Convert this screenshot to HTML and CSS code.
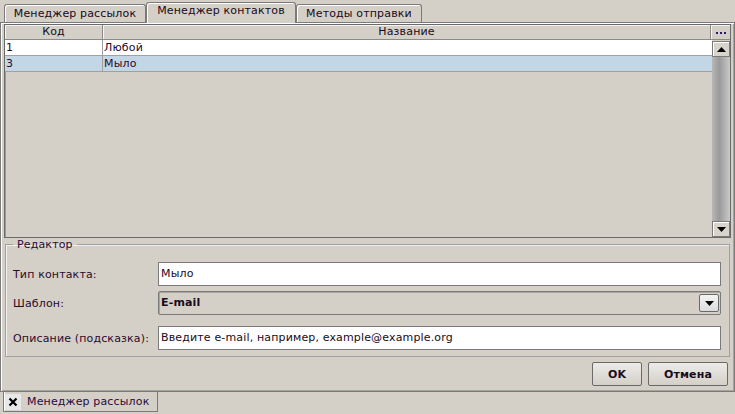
FILE: index.html
```html
<!DOCTYPE html>
<html lang="ru">
<head>
<meta charset="utf-8">
<link rel="stylesheet" href="styles.css">
</head>
<body>
<div class="window">
  <div class="tabs">
    <div class="tab">Менеджер рассылок</div>
    <div class="tab active">Менеджер контактов</div>
    <div class="tab">Методы отправки</div>
  </div>
  <div class="panel">
    <div class="table">
      <div class="thead">
        <div class="th c1">Код</div>
        <div class="th c2">Название</div>
        <div class="th c3"><span class="dots"><i></i><i></i><i></i></span></div>
      </div>
      <div class="tbody">
        <div class="rows">
          <div class="row"><div class="td c1">1</div><div class="td c2">Любой</div></div>
          <div class="row sel"><div class="td c1">3</div><div class="td c2">Мыло</div></div>
        </div>
        <div class="vscroll">
          <div class="sbtn"><svg width="9" height="5" viewBox="0 0 9 5"><path d="M0 5 L4.5 0 L9 5 Z" fill="#000"/></svg></div>
          <div class="track"></div>
          <div class="sbtn"><svg width="9" height="5" viewBox="0 0 9 5"><path d="M0 0 L4.5 5 L9 0 Z" fill="#000"/></svg></div>
        </div>
      </div>
    </div>
    <fieldset class="group">
      <legend>Редактор</legend>
      <div class="form">
        <label class="lbl">Тип контакта:</label>
        <div class="input">Мыло</div>
        <label class="lbl">Шаблон:</label>
        <div class="combo"><span>E-mail</span><span class="cbtn"><svg width="9" height="5" viewBox="0 0 9 5"><path d="M0 0 L4.5 5 L9 0 Z" fill="#000"/></svg></span></div>
        <label class="lbl">Описание (подсказка):</label>
        <div class="input">Введите e-mail, например, example@example.org</div>
      </div>
    </fieldset>
    <div class="buttons">
      <button class="btn ok">OK</button>
      <button class="btn cancel">Отмена</button>
    </div>
  </div>
  <div class="bottombar">
    <div class="btab"><span class="close"><svg width="10" height="10" viewBox="0 0 10 10"><path d="M1.5 1.5 L8.5 8.5 M8.5 1.5 L1.5 8.5" stroke="#000" stroke-width="2.2"/></svg></span>Менеджер рассылок</div>
  </div>
</div>
</body>
</html>
```

FILE: styles.css
```css
html, body {
  margin: 0;
  padding: 0;
}
body {
  background: #d4d0c8;
  font-family: "DejaVu Sans", sans-serif;
  font-size: 11px;
  letter-spacing: 0.15px;
  color: #2a0a2a;
  width: 735px;
  height: 414px;
  overflow: hidden;
}
.window {
  display: flex;
  flex-direction: column;
  height: 414px;
}
.tabs {
  display: flex;
  align-items: flex-end;
  height: 22px;
  padding-left: 4px;
  box-sizing: border-box;
}
.tab {
  height: 18px;
  box-sizing: border-box;
  border: 1px solid #7a7a7a;
  border-bottom: none;
  border-radius: 3px 3px 0 0;
  box-shadow: inset 1px 1px 0 #ffffff;
  background: #d4d0c8;
  line-height: 18px;
  color: #1a0a1a;
  white-space: nowrap;
  text-align: center;
}
.tab:first-child { width: 142px; }
.tab.active {
  height: 21px;
  width: 150px;
  line-height: 15px;
  position: relative;
  z-index: 1;
  margin-bottom: -1px;
}
.tab:last-child { width: 126px; }
.panel {
  flex: 0 0 370px;
  box-sizing: border-box;
  border: 1px solid #7a7a7a;
  box-shadow: inset 1px 1px 0 #ffffff, inset -1px -1px 0 #a8a49c;
  padding: 1px 3px 0 3px;
  display: flex;
  flex-direction: column;
}
.table {
  height: 214px;
  box-sizing: border-box;
  border: 1px solid #6a6a6a;
  box-shadow: inset 1px 1px 0 #9a9a9a;
  display: flex;
  flex-direction: column;
  background: #d4d0c8;
}
.thead {
  display: grid;
  grid-template-columns: 98px 1fr 19px;
  height: 15px;
}
.th {
  box-sizing: border-box;
  border-right: 1px solid #8a8a8a;
  border-bottom: 1px solid #8a8a8a;
  box-shadow: inset 1px 1px 0 #f4f4f4;
  text-align: center;
  line-height: 14px;
  color: #1a0a1a;
}
.th.c3 {
  border-right: none;
  display: flex;
  align-items: center;
  justify-content: center;
}
.dots { display: flex; gap: 2px; margin-top: 2px; }
.dots i {
  width: 2px; height: 2px; background: #2a1a6a; display: block;
}
.tbody {
  flex: 1;
  display: flex;
}
.rows {
  flex: 1;
  display: flex;
  flex-direction: column;
}
.row {
  display: grid;
  grid-template-columns: 98px 1fr;
  height: 16px;
  background: #ffffff;
  border-bottom: 1px solid #a0a0a0;
  box-sizing: border-box;
}
.row.sel { background: #c2d6e6; }
.td {
  line-height: 15px;
  padding-left: 1px;
  border-right: 1px solid #a0a0a0;
  white-space: nowrap;
}
.td.c2 { border-right: none; }
.vscroll {
  width: 18px;
  display: flex;
  flex-direction: column;
  padding-top: 1px;
}
.sbtn {
  height: 16px;
  box-sizing: border-box;
  border: 1px solid #7a7a7a;
  box-shadow: inset 1px 1px 0 #ffffff;
  background: #d8d4cc;
  display: flex;
  align-items: center;
  justify-content: center;
}
.track {
  flex: 1;
  background: linear-gradient(to right, #b8b8b8, #9a9a9a 40%, #c8c8c8);
}
.group {
  margin: 0 0 0 1px;
  width: 725px;
  height: 119px;
  box-sizing: border-box;
  border: 1px solid #a0a0a0;
  box-shadow: inset 1px 1px 0 #f0f0f0;
  padding: 0 8px 0 7px;
}
.group legend {
  padding: 0 4px;
  margin-left: 0;
  line-height: 13px;
  color: #2a0a3a;
}
.form {
  display: grid;
  grid-template-columns: 145px 1fr;
  grid-template-rows: 24px 24px 24px;
  row-gap: 5px;
  align-items: center;
  margin-top: 11px;
}
.input, .combo {
  height: 24px;
  box-sizing: border-box;
  border: 1px solid #7a7a7a;
  background: #ffffff;
  line-height: 22px;
  padding-left: 2px;
  color: #1a0a1a;
}
.form .lbl:nth-of-type(3), .input:last-child { margin-top: 12px; }
.combo {
  background: #d4d0c8;
  box-shadow: inset 1px 1px 0 #a8a49c;
  border-radius: 2px;
  font-weight: bold;
  display: flex;
  justify-content: space-between;
  align-items: center;
  padding-right: 1px;
}
.cbtn {
  width: 20px;
  height: 18px;
  box-sizing: border-box;
  border: 1px solid #6a6a6a;
  border-radius: 2px;
  background: linear-gradient(#f4f4f4, #dcdcdc);
  display: flex;
  align-items: center;
  justify-content: center;
}
.buttons {
  display: flex;
  justify-content: flex-end;
  gap: 6px;
  margin-top: 5px;
  padding-right: 3px;
}
.btn {
  height: 24px;
  box-sizing: border-box;
  border: 1px solid #6a6a6a;
  border-radius: 2px;
  background: linear-gradient(#ecebe8, #d4d0c8);
  font-family: "DejaVu Sans", sans-serif;
  font-size: 11px;
  letter-spacing: 0.15px;
  font-weight: bold;
  color: #1a0a1a;
  padding: 0;
}
.btn.ok { width: 50px; }
.btn.cancel { width: 80px; }
.bottombar {
  height: 22px;
  padding-left: 3px;
  display: flex;
  align-items: flex-start;
}
.btab {
  height: 20px;
  width: 155px;
  box-sizing: border-box;
  border: 1px solid #7a7a7a;
  border-top: none;
  box-shadow: inset 1px 0 0 #ffffff;
  display: flex;
  align-items: center;
  white-space: nowrap;
  color: #2a0a3a;
}
.close {
  width: 16px;
  height: 16px;
  margin: 0 6px 0 1px;
  background: #e8e8e8;
  display: flex;
  align-items: center;
  justify-content: center;
}
```
